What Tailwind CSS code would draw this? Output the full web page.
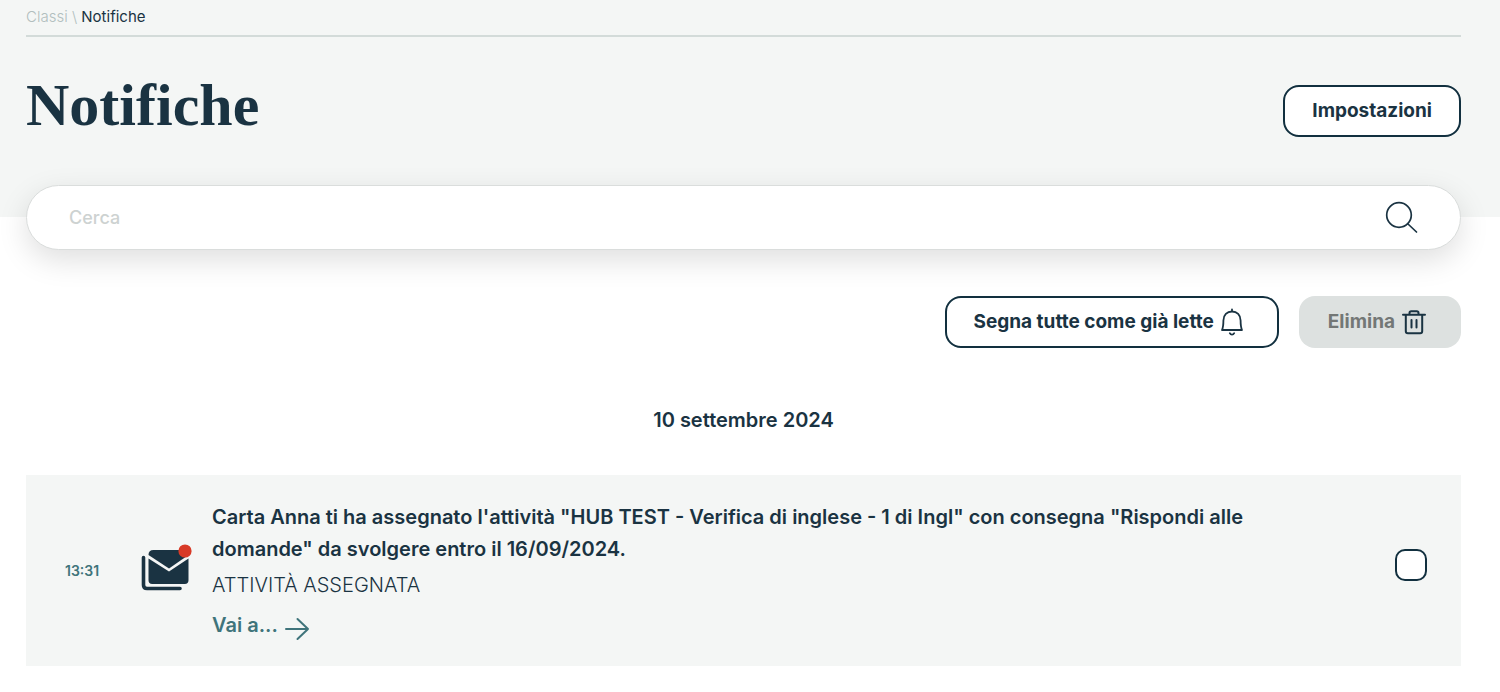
<!DOCTYPE html>
<html lang="it">
<head>
<meta charset="utf-8">
<meta name="viewport" content="width=device-width, initial-scale=1">
<title>Notifiche</title>
<script src="https://cdn.jsdelivr.net/npm/@tailwindcss/browser@4"></script>
</head>
<body class="bg-white font-['Inter',sans-serif] text-[#1a3342]">
<header class="bg-[#f4f6f5] pr-[39px] pb-20 pl-[26px]">
  <nav aria-label="Percorso" class="border-b-2 border-[#d3dbd9] pt-[7px] pb-2 text-[15px] leading-5 font-light">
    <a href="#" class="text-[#b1bebe]">Classi</a>
    <span class="text-[#b1bebe]">\</span>
    <a href="#" aria-current="page" class="font-normal">Notifiche</a>
  </nav>
  <div class="flex items-center justify-between pt-12">
    <h1 class="pb-3 font-['Liberation_Serif',serif] text-[60px] leading-10 font-bold">Notifiche</h1>
    <button type="button" class="h-[52px] rounded-2xl border-2 border-[#12303f] bg-white px-[27px] text-[19px] font-bold">Impostazioni</button>
  </div>
</header>
<main class="pr-[39px] pl-[26px]">
  <form role="search" class="-mt-8 flex h-[65px] items-center rounded-full border border-[#dadddc] bg-white pr-[41px] pl-[42px] shadow-[0_10px_30px_rgba(0,0,0,0.13)]">
    <input type="search" aria-label="Cerca" placeholder="Cerca" class="min-w-0 flex-1 bg-transparent text-lg font-medium outline-none placeholder:text-[#cdd2d1]">
    <button type="submit" aria-label="Avvia ricerca" class="pb-0.5">
      <svg class="size-9" viewBox="0 0 36 36" fill="none" stroke="#1a3342" stroke-width="1.7" stroke-linecap="round"><circle cx="16" cy="16" r="12.3"/><path d="M25 25l8.500 8"/></svg>
    </button>
  </form>
  <div class="mt-[46px] flex justify-end gap-5">
    <button type="button" class="flex h-[52px] items-center gap-1.5 rounded-2xl border-2 border-[#12303f] bg-white pr-[33px] pl-[27px] text-[19px] font-bold">
      Segna tutte come già lette
      <svg class="h-7 w-6" viewBox="0 0 24 28" fill="none" stroke="#1a3342" stroke-width="1.8" stroke-linecap="round" stroke-linejoin="round"><path d="M12 1.500v2M2 22c1.200-2.700 1.400-6 1.400-9.500C3.400 7 7 3.500 12 3.500s8.600 3.500 8.600 9c0 3.500.2 6.800 1.400 9.500zM9.800 25.200c1 1.900 3.400 1.900 4.400 0"/></svg>
    </button>
    <button type="button" disabled class="flex h-[52px] items-center gap-1.5 rounded-2xl bg-[#dde1e0] pr-[34px] pl-[29px] text-[19px] font-bold text-[#737776]">
      Elimina
      <svg class="size-[26px]" viewBox="0 0 26 26" fill="none" stroke="#1a3342" stroke-width="2" stroke-linecap="round" stroke-linejoin="round"><path d="M2 5.800h22M4.800 5.800v16.400c0 1.300.8 2 2 2h12.400c1.200 0 2-.7 2-2V5.800M8.500 5.500V4c0-1.200.7-1.800 1.800-1.800h5.400c1.100 0 1.800.6 1.800 1.800v1.500M10.500 11v7.500M15.500 11v7.500"/></svg>
    </button>
  </div>
  <section>
    <h2 class="mt-14 text-center text-xl leading-8 font-semibold">10 settembre 2024</h2>
    <article class="mt-[39px] flex items-center bg-[#f4f6f5] pt-[26px] pr-[34px] pb-[25px] pl-[39px]">
      <time class="w-[76px] shrink-0 text-sm font-semibold text-[#3f747b]">13:31</time>
      <svg class="mr-5 mb-2 h-12 w-[51px] shrink-0" viewBox="0 0 51 48" aria-hidden="true"><path d="M2.500 14.500v27.500q0 3.500 3.500 3.500h33" fill="none" stroke="#1a3342" stroke-width="3.600" stroke-linecap="round"/><path d="M7.500 15.500L28 28.500l19.500-13v21.800q0 3.700-3.700 3.700H11.200q-3.700 0-3.700-3.700z" fill="#1a3342"/><path d="M7.500 12q0-5 5-5h30q5 0 5 5L28 25.500z" fill="#1a3342"/><circle cx="44" cy="8" r="6.600" fill="#d83a27"/></svg>
      <div class="min-w-0 flex-1 pr-32">
        <h3 class="text-xl leading-8 font-semibold">Carta Anna ti ha assegnato l'attività "HUB TEST - Verifica di inglese - 1 di Ingl" con consegna "Rispondi alle domande" da svolgere entro il 16/09/2024.</h3>
        <p class="mt-1 text-xl leading-8 font-light">ATTIVITÀ ASSEGNATA</p>
        <a href="#" class="mt-2 flex items-center gap-1.5 text-xl leading-8 font-semibold text-[#3f747b]">Vai a...
          <svg class="mt-2 h-6 w-[26px]" viewBox="0 0 26 24" fill="none" stroke="currentColor" stroke-width="2" stroke-linecap="round" stroke-linejoin="round"><path d="M2 12h22M13.500 2L24 12 13.500 22"/></svg>
        </a>
      </div>
      <input type="checkbox" aria-label="Seleziona notifica" class="mb-3 size-8 shrink-0 appearance-none rounded-[10px] border-2 border-[#12303f] bg-white checked:bg-[#12303f]">
    </article>
  </section>
</main>
</body>
</html>
